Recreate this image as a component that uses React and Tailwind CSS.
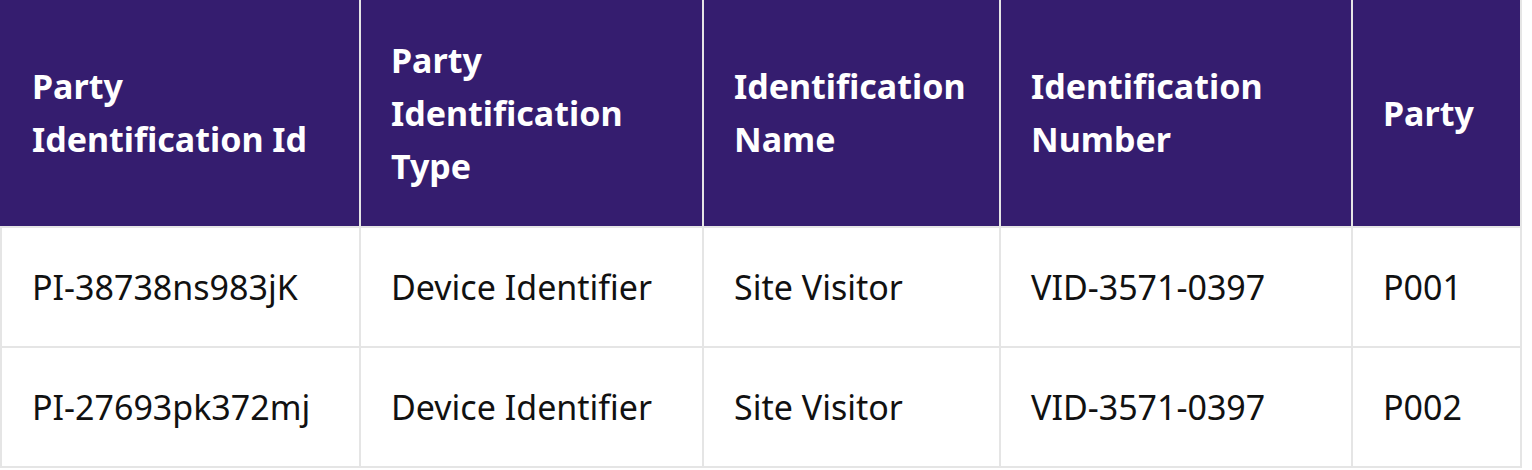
import React from 'react';

const columns = [
    { label: 'Party Identification Id', width: 'w-[361px]' },
    { label: 'Party Identification Type', width: 'w-[343px]' },
    { label: 'Identification Name', width: 'w-[297px]' },
    { label: 'Identification Number', width: 'w-[352px]' },
    { label: 'Party', width: 'w-[169px]' },
];

const rows = [
    ['PI-38738ns983jK', 'Device Identifier', 'Site Visitor', 'VID-3571-0397', 'P001'],
    ['PI-27693pk372mj', 'Device Identifier', 'Site Visitor', 'VID-3571-0397', 'P002'],
];

const App = () => {
    return (
        <div className="w-[1532px] h-[470px] bg-white font-['Noto_Sans',sans-serif] text-[34px] leading-[53px]">
            <div className="w-[1522px]">
                {/* Header */}
                <div className="flex h-[226px] bg-[#351d6f] text-white font-bold">
                    {columns.map((col, i) => (
                        <div
                            key={col.label}
                            className={`${col.width} flex items-center border-r-2 border-[#e5e5e5] ${i === 0 ? 'pl-[32px]' : 'pl-[30px]'} pr-3`}
                        >
                            <span>{col.label}</span>
                        </div>
                    ))}
                </div>

                {/* Body */}
                <div className="border-t-2 border-[#e5e5e5]">
                    {rows.map((row, r) => (
                        <div key={r} className="flex h-[120px] border-b-2 border-[#e5e5e5] text-[#111111]">
                            {row.map((cell, i) => (
                                <div
                                    key={i}
                                    className={`${columns[i].width} flex items-center border-r-2 border-[#e5e5e5] pl-[30px] ${i === 0 ? 'border-l-2' : ''}`}
                                >
                                    {cell}
                                </div>
                            ))}
                        </div>
                    ))}
                </div>
            </div>
        </div>
    );
};

export default App;
